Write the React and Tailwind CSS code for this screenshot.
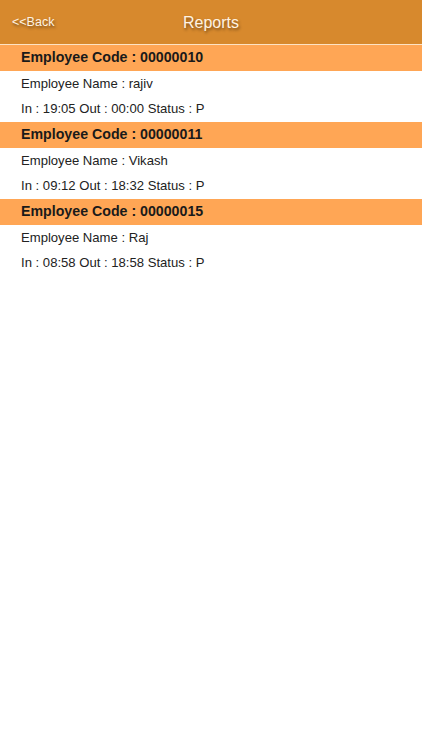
import React from 'react';

const records = [
  { code: '00000010', name: 'rajiv', inTime: '19:05', outTime: '00:00', status: 'P' },
  { code: '00000011', name: 'Vikash', inTime: '09:12', outTime: '18:32', status: 'P' },
  { code: '00000015', name: 'Raj', inTime: '08:58', outTime: '18:58', status: 'P' },
];

export default function App() {
  return (
    <div className="min-h-[750px] w-full bg-white font-['Liberation_Sans',Arial,sans-serif]">
      {/* top bar */}
      <div className="relative flex h-[44px] items-center justify-center bg-[#d7892d]">
        <button className="absolute left-[12px] top-[14px] text-[12.5px] leading-[16px] text-[#fff3e2] [text-shadow:1px_2px_3px_rgba(0,0,0,0.45)]">
          &lt;&lt;Back
        </button>
        <h1 className="pt-[2px] text-[16px] text-[#fff3e2] [text-shadow:1px_2px_3px_rgba(0,0,0,0.45)]">
          Reports
        </h1>
      </div>
      <div className="h-[1px] bg-[#fde3c4]" />

      {records.map((r) => (
        <div key={r.code}>
          <div className="flex h-[26px] items-center bg-[#ffa655] pl-[21px] text-[14.2px] font-bold text-[#1a1a1a]">
            Employee Code : {r.code}
          </div>
          <div className="flex h-[25.5px] items-center pl-[21px] text-[13.1px] text-[#222]">
            Employee Name : {r.name}
          </div>
          <div className="flex h-[25.5px] items-center pl-[21px] text-[13.1px] text-[#222]">
            In : {r.inTime} Out : {r.outTime} Status : {r.status}
          </div>
        </div>
      ))}
    </div>
  );
}
